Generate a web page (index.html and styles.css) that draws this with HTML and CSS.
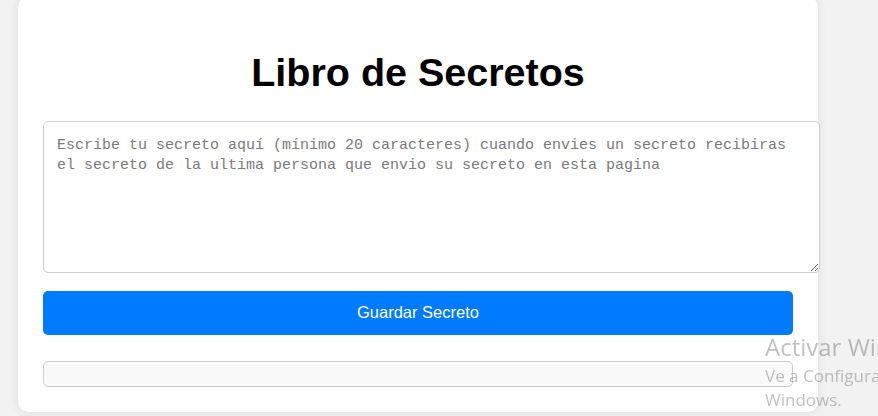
FILE: index.html
```html
<!DOCTYPE html>
<html lang="es">
<head>
<meta charset="utf-8">
<title>Libro de Secretos</title>
<link rel="stylesheet" href="styles.css">
</head>
<body>
<div class="card">
  <h1 class="title">Libro de Secretos</h1>
  <textarea class="secret-input" placeholder="Escribe tu secreto aquí (mínimo 20 caracteres) cuando envies un secreto recibiras el secreto de la ultima persona que envio su secreto en esta pagina"></textarea>
  <button class="save-btn" type="button">Guardar Secreto</button>
  <div class="result"></div>
</div>
<div class="watermark">
  <div class="wm-title">Activar Windows</div>
  <div class="wm-sub">Ve a Configuración para activar<br>Windows.</div>
</div>
</body>
</html>
```
FILE: styles.css
```css
html, body {
  margin: 0;
  padding: 0;
  background: #f2f2f2;
  overflow: hidden;
  height: 100%;
}

body {
  font-family: "Liberation Sans", Arial, sans-serif;
}

.card {
  width: 750px;
  margin: -3px 0 0 18px;
  padding: 25px 25px 25px 25px;
  background: #ffffff;
  border-radius: 10px;
  box-shadow: 0 0 10px rgba(0, 0, 0, 0.1);
  display: flex;
  flex-direction: column;
}

.title {
  margin: 27.5px 0 26.8px;
  font-size: 39.5px;
  font-weight: bold;
  text-align: center;
  color: #000;
  line-height: 44.2px;
}

.secret-input {
  box-sizing: content-box;
  width: 100%;
  height: 124px;
  margin: 0;
  padding: 14px 12px 12px 13px;
  border: 1px solid #cccccc;
  border-radius: 5px;
  font-family: "Liberation Mono", "DejaVu Sans Mono", monospace;
  font-size: 15px;
  line-height: 20px;
  color: #333;
  background: #fff;
  resize: both;
}

.secret-input::placeholder {
  color: #7a7a7a;
}

.save-btn {
  margin-top: 18px;
  height: 44px;
  border: none;
  border-radius: 5px;
  background: #007bff;
  color: #ffffff;
  font-family: "Liberation Sans", Arial, sans-serif;
  font-size: 16.5px;
  cursor: pointer;
}

.result {
  margin-top: 26px;
  padding: 12px;
  background: #f9f9f9;
  border: 1px solid #cccccc;
  border-radius: 5px;
}

.watermark {
  position: fixed;
  left: 765px;
  top: 331px;
  white-space: nowrap;
  font-family: "Open Sans", "Noto Sans", sans-serif;
  color: rgba(90, 90, 90, 0.38);
  pointer-events: none;
}

.wm-title {
  font-size: 24px;
  line-height: 32px;
}

.wm-sub {
  font-size: 17px;
  line-height: 24px;
  margin-top: 1px;
}
```
